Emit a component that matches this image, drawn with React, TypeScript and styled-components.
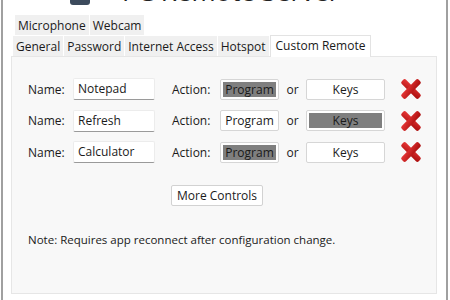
import React from 'react';
import styled, { createGlobalStyle } from 'styled-components';

const GlobalStyle = createGlobalStyle`
    html, body {
        margin: 0;
        padding: 0;
        background: #ffffff;
        font-family: "Open Sans", "Noto Sans", sans-serif;
        color: #1a1a1a;
    }
`;

const Window = styled.div`
    height: 300px;
    width: 447px;
    box-sizing: border-box;
    overflow: hidden;
    border-left: 2px solid #a0a0a0;
    border-right: 2px solid #a0a0a0;
    margin-left: 1px;
    padding: 0 9px 0 8px;
`;

const Header = styled.div`
    display: flex;
    align-items: flex-end;
    gap: 32px;
    height: 5px;
    padding-left: 59px;
    overflow: hidden;
`;

const LogoBox = styled.div`
    width: 20px;
    height: 24px;
    border-radius: 3px;
    background: #3c4a5c;
`;

const Title = styled.div`
    font-size: 26px;
    line-height: 26px;
    margin-bottom: 1px;
    color: #222;
    white-space: nowrap;
`;

const TabRow = styled.div<{ $first?: boolean }>`
    display: flex;
    align-items: flex-end;
    padding-left: ${p => (p.$first ? '4px' : '2px')};
    margin-top: ${p => (p.$first ? '10px' : '0')};
`;

const Tab = styled.div<{ $active?: boolean }>`
    font-size: 12px;
    line-height: 19px;
    padding: ${p => (p.$active ? '0 5px 2px' : '0 2px')};
    background: ${p => (p.$active ? '#ffffff' : '#f0f0f0')};
    border: 1px solid ${p => (p.$active ? '#e3e3e3' : '#f0f0f0')};
    border-bottom: none;
    margin-right: 1px;
    position: relative;
    z-index: ${p => (p.$active ? 1 : 0)};
    margin-bottom: ${p => (p.$active ? '-1px' : '0')};
    white-space: nowrap;
`;

const Panel = styled.div`
    background: #f8f8f8;
    border: 1px solid #e6e6e6;
    height: 238px;
    box-sizing: border-box;
    padding: 21px 0 0 16px;
    display: flex;
    flex-direction: column;
`;

const Row = styled.div`
    display: flex;
    align-items: center;
    height: 22px;
    margin-bottom: 9.5px;
    font-size: 12px;
`;

const Label = styled.span<{ $w: number; $gap?: number }>`
    width: ${p => p.$w}px;
    margin-left: ${p => p.$gap ?? 0}px;
`;

const NameInput = styled.div`
    width: 82px;
    height: 22px;
    box-sizing: border-box;
    background: #fff;
    border: 1px solid #ececec;
    border-bottom: 1px solid #9a9a9a;
    border-radius: 2px;
    padding: 0 4px;
    line-height: 20px;
`;

const Toggle = styled.div<{ $w: number }>`
    width: ${p => p.$w}px;
    height: 21px;
    box-sizing: border-box;
    border: 1px solid #d6d6d6;
    border-radius: 2px;
    background: #fff;
    padding: 2px;
    display: flex;
`;

const ToggleFace = styled.div<{ $on?: boolean }>`
    flex: 1;
    background: ${p => (p.$on ? '#7f7f7f' : 'transparent')};
    text-align: center;
    line-height: 15px;
    font-size: 12px;
`;

const Or = styled.span`
    width: 27px;
    text-align: center;
`;

const DeleteIcon = styled.svg`
    width: 22px;
    height: 22px;
    margin-left: 15px;
`;

const MoreButton = styled.div`
    align-self: flex-start;
    margin: 12px 0 0 143px;
    font-size: 12px;
    line-height: 19px;
    padding: 0 5px;
    background: #fff;
    border: 1px solid #d2d2d2;
    border-radius: 2px;
`;

const Note = styled.div`
    font-size: 11.5px;
    margin-top: 26px;
`;

const RedX: React.FunctionComponent = () => (
    <DeleteIcon viewBox="0 0 22 22">
        <defs>
            <linearGradient id="xg" x1="0" y1="0" x2="1" y2="1">
                <stop offset="0" stopColor="#e83838" />
                <stop offset="1" stopColor="#a80c0c" />
            </linearGradient>
        </defs>
        <g transform="translate(11 11)">
            <rect x="-12" y="-3" width="24" height="6" rx="2" fill="url(#xg)" transform="rotate(45)" />
            <rect x="-12" y="-3" width="24" height="6" rx="2" fill="url(#xg)" transform="rotate(-45)" />
        </g>
    </DeleteIcon>
);

const remotes = [
    { name: 'Notepad', program: true },
    { name: 'Refresh', program: false },
    { name: 'Calculator', program: true },
];

const App: React.FunctionComponent = () => {
    return (
        <>
            <GlobalStyle />
            <Window>
                <Header>
                    <LogoBox />
                    <Title>PC Remote Server</Title>
                </Header>
                <TabRow $first>
                    <Tab>Microphone</Tab>
                    <Tab>Webcam</Tab>
                </TabRow>
                <TabRow>
                    <Tab>General</Tab>
                    <Tab>Password</Tab>
                    <Tab>Internet Access</Tab>
                    <Tab>Hotspot</Tab>
                    <Tab $active>Custom Remote</Tab>
                </TabRow>
                <Panel>
                    {remotes.map(r => (
                        <Row key={r.name}>
                            <Label $w={45}>Name:</Label>
                            <NameInput>{r.name}</NameInput>
                            <Label $w={48} $gap={17}>Action:</Label>
                            <Toggle $w={59}>
                                <ToggleFace $on={r.program}>Program</ToggleFace>
                            </Toggle>
                            <Or>or</Or>
                            <Toggle $w={79}>
                                <ToggleFace $on={!r.program}>Keys</ToggleFace>
                            </Toggle>
                            <RedX />
                        </Row>
                    ))}
                    <MoreButton>More Controls</MoreButton>
                    <Note>Note: Requires app reconnect after configuration change.</Note>
                </Panel>
            </Window>
        </>
    );
}
export default App;
